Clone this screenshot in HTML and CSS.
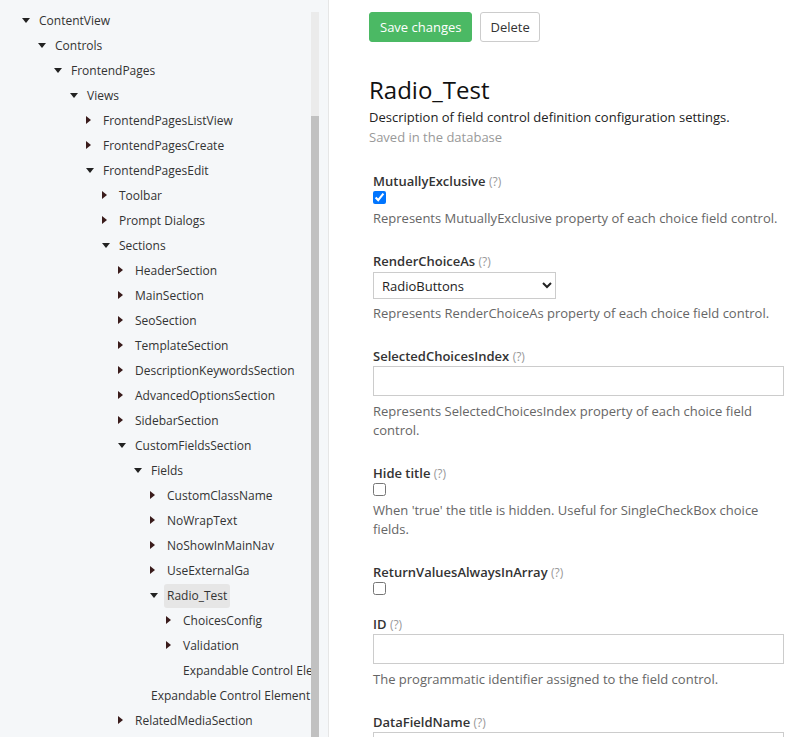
FILE: index.html
```html
<!DOCTYPE html>
<html lang="en">
<head>
<meta charset="utf-8">
<title>Radio_Test</title>
<link rel="stylesheet" href="styles.css">
</head>
<body>
<div class="layout">
  <aside class="sidebar">
    <nav class="tree">
      <ul class="tree-root">
        <li><div class="node"><span class="tg down"></span><span class="lbl">ContentView</span></div>
          <ul>
            <li><div class="node"><span class="tg down"></span><span class="lbl">Controls</span></div>
              <ul>
                <li><div class="node"><span class="tg down"></span><span class="lbl">FrontendPages</span></div>
                  <ul>
                    <li><div class="node"><span class="tg down"></span><span class="lbl">Views</span></div>
                      <ul>
                        <li><div class="node"><span class="tg right"></span><span class="lbl">FrontendPagesListView</span></div></li>
                        <li><div class="node"><span class="tg right"></span><span class="lbl">FrontendPagesCreate</span></div></li>
                        <li><div class="node"><span class="tg down"></span><span class="lbl">FrontendPagesEdit</span></div>
                          <ul>
                            <li><div class="node"><span class="tg right"></span><span class="lbl">Toolbar</span></div></li>
                            <li><div class="node"><span class="tg right"></span><span class="lbl">Prompt Dialogs</span></div></li>
                            <li><div class="node"><span class="tg down"></span><span class="lbl">Sections</span></div>
                              <ul>
                                <li><div class="node"><span class="tg right"></span><span class="lbl">HeaderSection</span></div></li>
                                <li><div class="node"><span class="tg right"></span><span class="lbl">MainSection</span></div></li>
                                <li><div class="node"><span class="tg right"></span><span class="lbl">SeoSection</span></div></li>
                                <li><div class="node"><span class="tg right"></span><span class="lbl">TemplateSection</span></div></li>
                                <li><div class="node"><span class="tg right"></span><span class="lbl">DescriptionKeywordsSection</span></div></li>
                                <li><div class="node"><span class="tg right"></span><span class="lbl">AdvancedOptionsSection</span></div></li>
                                <li><div class="node"><span class="tg right"></span><span class="lbl">SidebarSection</span></div></li>
                                <li><div class="node"><span class="tg down"></span><span class="lbl">CustomFieldsSection</span></div>
                                  <ul>
                                    <li><div class="node"><span class="tg down"></span><span class="lbl">Fields</span></div>
                                      <ul>
                                        <li><div class="node"><span class="tg right"></span><span class="lbl">CustomClassName</span></div></li>
                                        <li><div class="node"><span class="tg right"></span><span class="lbl">NoWrapText</span></div></li>
                                        <li><div class="node"><span class="tg right"></span><span class="lbl">NoShowInMainNav</span></div></li>
                                        <li><div class="node"><span class="tg right"></span><span class="lbl">UseExternalGa</span></div></li>
                                        <li><div class="node"><span class="tg down"></span><span class="lbl selected">Radio_Test</span></div>
                                          <ul>
                                            <li><div class="node"><span class="tg right"></span><span class="lbl">ChoicesConfig</span></div></li>
                                            <li><div class="node"><span class="tg right"></span><span class="lbl">Validation</span></div></li>
                                            <li><div class="node"><span class="tg"></span><span class="lbl">Expandable Control Element</span></div></li>
                                          </ul>
                                        </li>
                                      </ul>
                                    </li>
                                    <li><div class="node"><span class="tg"></span><span class="lbl">Expandable Control Element</span></div></li>
                                  </ul>
                                </li>
                                <li><div class="node"><span class="tg right"></span><span class="lbl">RelatedMediaSection</span></div></li>
                              </ul>
                            </li>
                          </ul>
                        </li>
                      </ul>
                    </li>
                  </ul>
                </li>
              </ul>
            </li>
          </ul>
        </li>
      </ul>
    </nav>
    <div class="scrollbar"><div class="thumb"></div></div>
  </aside>

  <main class="content">
    <div class="actions">
      <button class="btn btn-save">Save changes</button>
      <button class="btn btn-delete">Delete</button>
    </div>

    <h1 class="title">Radio_Test</h1>
    <p class="subtitle">Description of field control definition configuration settings.</p>
    <p class="saved">Saved in the database</p>

    <form class="fields">
      <div class="group">
        <label class="label">MutuallyExclusive <span class="help">(?)</span></label>
        <input type="checkbox" class="check" checked>
        <p class="desc">Represents MutuallyExclusive property of each choice field control.</p>
      </div>

      <div class="group">
        <label class="label">RenderChoiceAs <span class="help">(?)</span></label>
        <select class="select"><option>RadioButtons</option></select>
        <p class="desc">Represents RenderChoiceAs property of each choice field control.</p>
      </div>

      <div class="group">
        <label class="label">SelectedChoicesIndex <span class="help">(?)</span></label>
        <input type="text" class="text">
        <p class="desc">Represents SelectedChoicesIndex property of each choice field control.</p>
      </div>

      <div class="group">
        <label class="label">Hide title <span class="help">(?)</span></label>
        <input type="checkbox" class="check">
        <p class="desc">When 'true' the title is hidden. Useful for SingleCheckBox choice fields.</p>
      </div>

      <div class="group group-short">
        <label class="label">ReturnValuesAlwaysInArray <span class="help">(?)</span></label>
        <input type="checkbox" class="check">
      </div>

      <div class="group">
        <label class="label">ID <span class="help">(?)</span></label>
        <input type="text" class="text">
        <p class="desc">The programmatic identifier assigned to the field control.</p>
      </div>

      <div class="group">
        <label class="label">DataFieldName <span class="help">(?)</span></label>
        <input type="text" class="text">
      </div>
    </form>
  </main>
</div>
</body>
</html>
```

FILE: styles.css
```css
html, body {
  margin: 0;
  padding: 0;
  height: 100%;
  overflow: hidden;
}

body {
  font-family: "Open Sans", "Noto Sans", sans-serif;
  font-size: 13px;
  color: #333;
  background: #fff;
}

.layout {
  display: flex;
  height: 737px;
}

/* ---------- sidebar ---------- */
.sidebar {
  width: 328px;
  flex: 0 0 328px;
  background: #f5f7f9;
  border-right: 1px solid #e6e6e6;
  display: flex;
  overflow: hidden;
}

.tree {
  width: 311px;
  flex: 0 0 311px;
  overflow: hidden;
  white-space: nowrap;
  padding-top: 8px;
  font-size: 12px;
}

.tree ul {
  list-style: none;
  margin: 0;
  padding: 0 0 0 16px;
}

.tree ul.tree-root {
  padding-left: 22px;
}

.node {
  display: flex;
  align-items: center;
  height: 25px;
}

.tg {
  width: 8px;
  height: 9px;
  flex: 0 0 8px;
  margin-right: 6px;
  position: relative;
}

.tg.down::before {
  content: "";
  position: absolute;
  left: 0;
  top: 2px;
  border-left: 4px solid transparent;
  border-right: 4px solid transparent;
  border-top: 5px solid #222;
}

.tg.right::before {
  content: "";
  position: absolute;
  left: 0;
  top: 0;
  border-top: 4.5px solid transparent;
  border-bottom: 4.5px solid transparent;
  border-left: 5px solid #3a1c1c;
}

.lbl {
  padding: 0 3px;
  line-height: 24px;
  border-radius: 3px;
  color: #333;
}

.lbl.selected {
  background: #e6e6e6;
}

.scrollbar {
  width: 8px;
  flex: 0 0 8px;
  margin: 12px 9px 0 0;
  background: #ebebeb;
  display: flex;
  flex-direction: column;
}

.thumb {
  margin-top: 104px;
  flex: 1;
  background: #c1c1c1;
}

/* ---------- content ---------- */
.content {
  flex: 1;
  padding: 12px 20px 0 40px;
  overflow: hidden;
}

.actions {
  display: flex;
  gap: 8px;
}

.btn {
  font-family: "Open Sans", "Noto Sans", sans-serif;
  font-size: 13px;
  height: 30px;
  padding: 0 10px 1px;
  border-radius: 3px;
  cursor: pointer;
}

.btn-save {
  background: #4bb964;
  border: 1px solid #4bb964;
  color: #fff;
}

.btn-delete {
  background: #fff;
  border: 1px solid #ccc;
  color: #333;
  padding: 0 9px 1px;
}

.title {
  margin: 32px 0 0;
  font-size: 24px;
  font-weight: 400;
  line-height: 32px;
  color: #111;
}

.subtitle {
  margin: 1px 0 0;
  line-height: 20px;
  color: #222;
}

.saved {
  margin: 0;
  line-height: 20px;
  color: #999;
}

.fields {
  margin-top: 25px;
  padding-left: 4px;
  width: 411px;
}

.group {
  margin-bottom: 24px;
}

.group-short {
  margin-bottom: 20px;
}

.label {
  display: block;
  font-weight: 600;
  line-height: 18px;
  color: #333;
}

.help {
  font-weight: 400;
  font-size: 12px;
  color: #999;
}

.check {
  display: block;
  width: 13px;
  height: 13px;
  margin: 0;
}

.select {
  display: block;
  margin-top: 1px;
  width: 183px;
  height: 27px;
  border: 1px solid #ccc;
  border-radius: 0;
  background: #fff;
  padding: 0 4px 0 4px;
  font-family: "Open Sans", "Noto Sans", sans-serif;
  font-size: 13px;
  color: #222;
}

.text {
  display: block;
  box-sizing: border-box;
  width: 411px;
  height: 30px;
  border: 1px solid #ccc;
  border-radius: 0;
  padding: 0 8px;
  font-family: "Open Sans", "Noto Sans", sans-serif;
  font-size: 13px;
}

.desc {
  margin: 5px 0 0;
  line-height: 19px;
  color: #666;
}

.text + .desc {
  margin-top: 6px;
}
```
